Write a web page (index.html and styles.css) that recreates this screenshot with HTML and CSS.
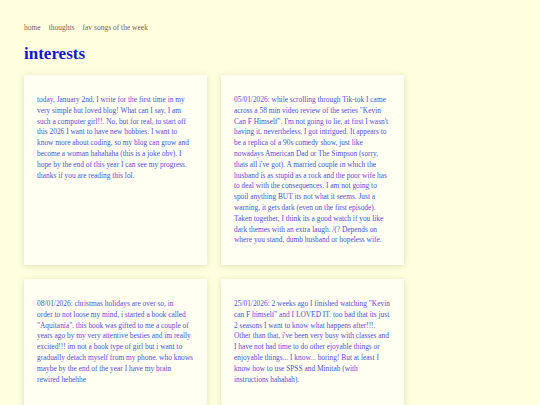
FILE: index.html
```html
<!DOCTYPE html>
<html>
<head>
<meta charset="utf-8">
<link rel="stylesheet" href="styles.css">
</head>
<body>
<div class="page">
  <nav class="nav">
    <a class="nav-link">home</a>
    <a class="nav-link">thoughts</a>
    <a class="nav-link">fav songs of the week</a>
  </nav>
  <h1 class="title">interests</h1>
  <div class="grid">
    <div class="card"><p>today, January 2nd, I write for the first time in my very simple but loved blog! What can I say, I am such a computer girl!!. No, but for real, to start off this 2026 I want to have new hobbies. I want to know more about coding, so my blog can grow and become a woman hahahaha (this is a joke obv). I hope by the end of this year I can see my progress. thanks if you are reading this lol.</p></div>
    <div class="card"><p>05/01/2026: while scrolling through Tik-tok I came across a 58 min video review of the series "Kevin Can F Himself". I'm not going to lie, at first I wasn't having it, nevertheless, I got intrigued. It appears to be a replica of a 90s comedy show, just like nowadays American Dad or The Simpson (sorry, thats all i've got). A married couple in which the husband is as stupid as a rock and the poor wife has to deal with the consequences. I am not going to spoil anything BUT its not what it seems. Just a warning, it gets dark (even on the first episode). Taken together, I think its a good watch if you like dark themes with an extra laugh. /(? Depends on where you stand, dumb husband or hopeless wife.</p></div>
    <div class="card"><p>08/01/2026: christmas holidays are over so, in<br>order to not loose my mind, i started a book called "Aquitania". this book was gifted to me a couple of years ago by my very attentive besties and im really excited!!! im not a book type of girl but i want to gradually detach myself from my phone. who knows maybe by the end of the year I have my brain rewired hehehhe</p></div>
    <div class="card"><p>25/01/2026: 2 weeks ago I finished watching "Kevin can F himself" and I LOVED IT. too bad that its just 2 seasons I want to know what happens after!!!. Other than that, i've been very busy with classes and I have not had time to do other ejoyable things or enjoyable things... I know... boring! But at least I know how to use SPSS and Minitab (with instructions hahahah).</p></div>
  </div>
</div>
</body>
</html>
```
FILE: styles.css
```css
html, body {
  margin: 0;
  padding: 0;
  background: #ffffe0;
}
body {
  font-family: "Liberation Serif", serif;
}
.page {
  padding: 22px 24px 0 24px;
}
.nav {
  display: flex;
  gap: 8px;
  font-size: 7.5px;
  line-height: 11px;
}
.nav-link {
  color: #7d5e58;
}
.title {
  margin: 11px 0 11px 0;
  font-size: 17px;
  line-height: 20px;
  color: #1414d2;
}
.grid {
  display: grid;
  grid-template-columns: 183px 183px;
  gap: 14px;
}
.card {
  background: #fffff2;
  height: 190px;
  box-shadow: 0 1px 6px rgba(180, 180, 120, 0.45);
  padding: 20px 13px;
  box-sizing: border-box;
}
.card p {
  margin: 0;
  font-size: 7.4px;
  line-height: 10.8px;
  color: #4f4fdc;
}
```
